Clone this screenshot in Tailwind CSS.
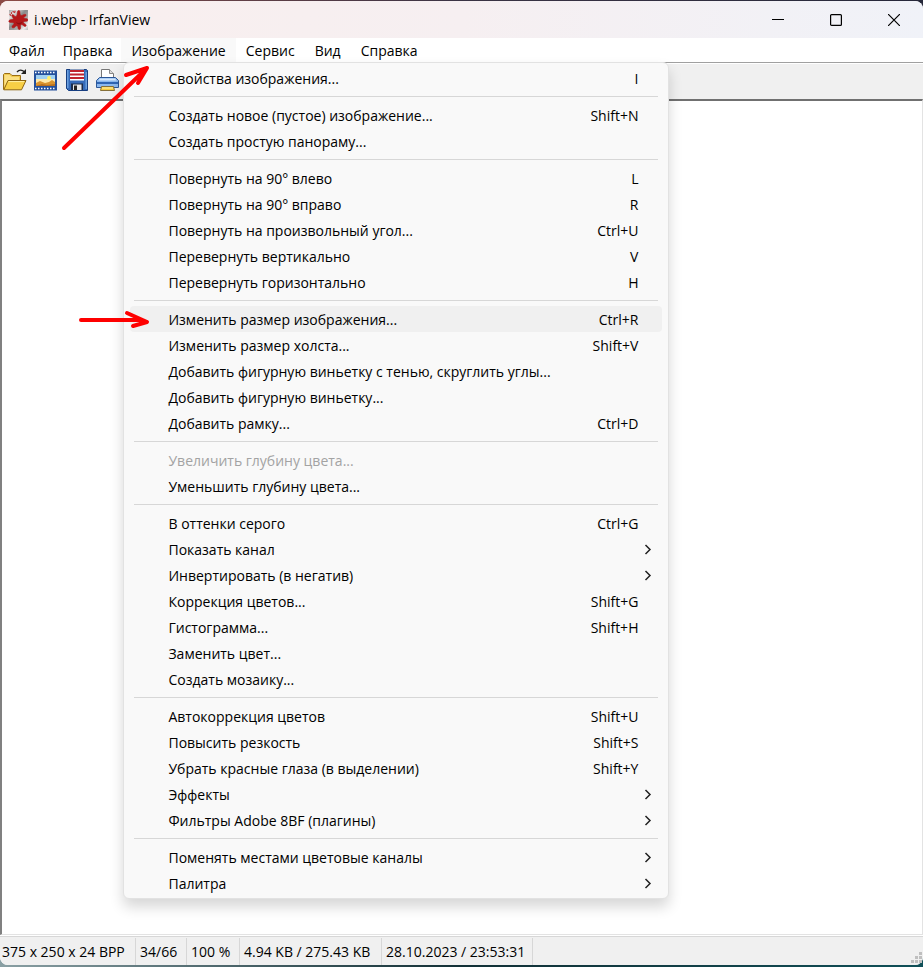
<!DOCTYPE html>
<html lang="ru">
<head>
    <meta charset="UTF-8">
    <title>i.webp - IrfanView</title>
    <script src="https://cdn.jsdelivr.net/npm/@tailwindcss/browser@4"></script>
</head>
<body class="flex flex-col h-screen pt-px pb-0.5 bg-linear-to-r from-[#8c4a45] via-[#3a3344] to-[#26283a] font-['Open_Sans','Noto_Sans',sans-serif] text-sm text-black relative overflow-hidden">
    <div class="absolute inset-x-0 bottom-0 h-4 bg-linear-to-r from-[#8aa0a4] via-[#123036] to-[#0f5058]"></div>

    <div class="relative flex-1 flex flex-col rounded-lg bg-white">
        <!-- Title bar -->
        <header class="flex items-center h-[37px] pl-2 rounded-t-lg bg-linear-to-r from-[#f9efee] via-[#f6eff1] to-[#f0f2f8]">
            <svg class="size-5" viewBox="0 0 20 20">
                <defs>
                    <linearGradient id="steel" x1="0" y1="0" x2="1" y2="1">
                        <stop offset="0" stop-color="#a8a8a8"/><stop offset=".2" stop-color="#e2e2e2"/><stop offset=".45" stop-color="#8a8a8a"/><stop offset=".7" stop-color="#b0b0b0"/><stop offset=".85" stop-color="#eee"/><stop offset="1" stop-color="#bbb"/>
                    </linearGradient>
                </defs>
                <path fill="url(#steel)" d="M1 0h19v20H1z"/>
                <path fill="#b3181a" stroke="#b3181a" stroke-width=".6" d="M7.500 6.500C9.500 6.500 9 4 9.500 1.500c.5-1.500 2.300-1.200 2.400.2.100 2 .2 4 1.600 3.800 1.500-.3 2.500-1.500 4-1.200 1 .5.500 1.800-.8 2.500-1.500.8-1.200 1.700.3 1.800 1.500.1 3 .2 3 1.500s-2 1.300-3.500 1.300c-1.600 0-1.500 1.200-.3 2 1.400.8 2.600 1.600 1.800 2.700-1 1-2.300-.3-3.500-1.200-1.500-1-2.300.2-2 2 .2 1.600-.2 2.800-1.300 2.700-1.300-.2-1-1.900-1.500-3.100-.6-1.400-1.700-.7-2.700.4-1 1-2.200 1.300-2.900.5-.5-1 .5-2 1.400-2.800 1-1 .6-2-1-2.200-1.500-.1-3.500.3-3.700-1C.700 10 2.600 9.600 4.200 9.600c1.500 0 1.300-1 .5-2C4 6.500 3.600 5.200 4.500 4.600c1.200-.4 1.700 1.900 3 1.900z"/>
                <path fill="none" stroke="#c23a3c" stroke-width="1.200" stroke-linecap="round" d="M5 1.500l1.600 1M2 4.500l1 1M3.500 2.500v1M7 1v1"/>
                <path fill="#8d0f12" d="M8 12c2 1.500 5 1 6.500-.5-.5 2-1.500 2.500-3 3-1.500.2-3-.8-3.500-2.500z"/>
            </svg>
            <h1 class="flex-1 pl-1.5">i.webp - IrfanView</h1>
            <button class="w-[58px] h-9 flex items-center justify-center" aria-label="Свернуть">
                <svg class="size-3" viewBox="0 0 12 12"><path stroke="#000" d="M0 5.500h12"/></svg>
            </button>
            <button class="w-[58px] h-9 flex items-center justify-center" aria-label="Развернуть">
                <svg class="size-3" viewBox="0 0 12 12"><rect x=".6" y=".6" width="10.800" height="10.800" rx="1" fill="none" stroke="#000" stroke-width="1.200"/></svg>
            </button>
            <button class="w-[58px] h-9 flex items-center justify-center" aria-label="Закрыть">
                <svg class="size-3" viewBox="0 0 12 12"><path stroke="#000" stroke-width="1.200" d="M0 0l12 12M12 0L0 12"/></svg>
            </button>
        </header>

        <!-- Menu bar -->
        <nav class="flex h-6 bg-white">
            <button class="px-[9px] pt-0.5 whitespace-nowrap">Файл</button>
            <button class="px-[9px] pt-0.5 whitespace-nowrap">Правка</button>
            <div class="relative flex">
                <button class="px-2.5 pt-0.5 whitespace-nowrap bg-[#f9f9f9]" aria-haspopup="menu" aria-expanded="true">Изображение</button>
                <div id="imageMenu" role="menu" class="absolute left-0.5 top-6 z-10 w-[546px] px-1.5 pt-0.5 pb-0.5 flex flex-col bg-[#f9f9f9] border border-[#e2e2e2] rounded-md shadow-[0_8px_14px_rgba(0,0,0,0.16)]"></div>
            </div>
            <button class="px-2.5 pt-0.5 whitespace-nowrap">Сервис</button>
            <button class="px-2.5 pt-0.5 whitespace-nowrap">Вид</button>
            <button class="px-2.5 pt-0.5 whitespace-nowrap">Справка</button>
        </nav>

        <!-- Toolbar -->
        <div class="flex items-center gap-1.5 h-[37px] pl-0.5 pb-px bg-[#f0f0f0] border-t border-[#a0a0a0] shadow-[inset_0_1px_#fff]">
            <button class="size-[25px]" aria-label="Открыть">
                <svg class="size-full" viewBox="0 0 25 25">
                    <path fill="#f0c94e" stroke="#9a6e14" d="M1.500 21.500v-15l1-1H8l2 2h8.500v5"/>
                    <path fill="#fbe083" d="M2.500 7h5l2 2H17v4H6l-3.500 6z"/>
                    <path fill="#f8cf45" stroke="#8d6410" d="M1.800 21.800L6 12.500h18l-4.500 9.300z"/>
                    <path fill="none" stroke="#fff0a8" d="M6.600 13.600h15.600"/>
                    <path fill="none" stroke="#222" stroke-width="1.300" d="M15 4c2-2.600 5-2.400 7.500-.2"/>
                    <path fill="#222" d="M24 1v5h-5z"/>
                </svg>
            </button>
            <button class="size-[25px]" aria-label="Слайд-шоу">
                <svg class="size-full" viewBox="0 0 25 25">
                    <path fill="#24509c" d="M1 2.500h23v20H1z"/>
                    <path fill="none" stroke="#fff" stroke-width="1.500" stroke-dasharray="1.500 1.500" d="M2 4.500h21M2 20.500h21"/>
                    <path fill="#9fd0f2" d="M3 7h19v11H3z"/>
                    <path fill="#ffe9a8" d="M3 11h19v4H3z"/>
                    <circle cx="16" cy="10" r="2" fill="#fff06a"/>
                    <path fill="#d9932f" d="M3 18v-3l4-2 5 2 4-1 3-2 3 2v4z"/>
                    <path fill="#b87020" d="M3 18l6-2 5 1 8-1v2z"/>
                </svg>
            </button>
            <button class="size-[25px]" aria-label="Сохранить">
                <svg class="size-full" viewBox="0 0 25 25">
                    <path fill="#356ab8" stroke="#173e80" d="M2.500 1.500h20l1 1v20h-19l-2-2z"/>
                    <path fill="#6ba0df" d="M3 2h1.500v18H3zM21.500 4H23v17h-1.500z"/>
                    <path fill="#fff" d="M6 1.500h14v11H6z"/>
                    <path stroke="#c0222c" stroke-width="2" d="M6 3h14M6 6.500h14M6 10h14"/>
                    <path fill="#1b2b48" d="M7 15.500h12V22H7z"/>
                    <path fill="#e8e8e8" d="M9 16.500h8.500V22H9z"/>
                    <path fill="#222" d="M10 17.500h3V22h-3z"/>
                </svg>
            </button>
            <button class="size-[25px]" aria-label="Печать">
                <svg class="size-full" viewBox="0 0 25 25">
                    <path fill="#fff" stroke="#777" d="M6.500 11V1.500h8l4 4V11"/>
                    <path fill="#ddd" stroke="#888" d="M14.500 1.500v4h4"/>
                    <path fill="#8bb8ee" stroke="#2c5797" d="M4.500 9.500h16l3 3v7h-22v-7z"/>
                    <path fill="#d4e7fd" d="M5 10.500h15l1.500 2H3.500z"/>
                    <path fill="#2f65b4" d="M2 14h21v2H2z"/>
                    <path fill="#f7c93b" stroke="#85703a" d="M6.500 18.500h12l1 4h-14z"/>
                    <path stroke="#fff3b0" d="M7 20h11"/>
                </svg>
            </button>
        </div>

        <!-- Canvas -->
        <main class="flex-1 bg-white border-t-2 border-l-2 border-r border-b border-t-[#707070] border-l-[#808080] border-r-[#e3e3e3] border-b-[#e3e3e3]"></main>

        <!-- Status bar -->
        <footer class="mt-px flex items-stretch h-[29px] pt-px bg-[#f0f0f0] border-t border-[#d7d7d7] rounded-b-lg whitespace-nowrap">
            <span class="w-[136px] pl-0.5 flex items-center border-r border-[#d7d7d7]">375 x 250 x 24 BPP</span>
            <span class="w-[51px] pl-1 flex items-center border-r border-[#d7d7d7]">34/66</span>
            <span class="w-[53px] pl-1 flex items-center border-r border-[#d7d7d7]">100 %</span>
            <span class="w-[142px] pl-1 flex items-center border-r border-[#d7d7d7]">4.94 KB / 275.43 KB</span>
            <span class="w-[151px] pl-1 flex items-center border-r border-[#d7d7d7]">28.10.2023 / 23:53:31</span>
            <svg class="ml-auto self-end size-3 mb-px" viewBox="0 0 12 12"><path fill="#bfbfbf" d="M8 0h3v3H8zM8 4h3v3H8zM8 8h3v3H8zM4 4h3v3H4zM4 8h3v3H4zM0 8h3v3H0z"/></svg>
        </footer>
    </div>

    <!-- Red pointers -->
    <svg class="absolute left-[60px] top-[62px] z-20 w-[92px] h-[90px] pointer-events-none" viewBox="0 0 92 90" fill="none" stroke="#fe0000" stroke-width="4" stroke-linecap="round" stroke-linejoin="round">
        <path d="M4 86L87 6M66 13L87 6L78 21"/>
    </svg>
    <svg class="absolute left-[78px] top-[308px] z-20 w-[74px] h-6 pointer-events-none" viewBox="0 0 74 24" fill="none" stroke="#fe0000" stroke-width="4" stroke-linecap="round" stroke-linejoin="round">
        <path d="M3 12H62L69 14M49 5L69 14L55 18"/>
    </svg>

    <script>
        // [label, shortcut], '>' marks a submenu, null is a separator
        const items = [
            ['Свойства изображения...', 'I'],
            null,
            ['Создать новое (пустое) изображение...', 'Shift+N'],
            ['Создать простую панораму...', ''],
            null,
            ['Повернуть на 90° влево', 'L'],
            ['Повернуть на 90° вправо', 'R'],
            ['Повернуть на произвольный угол...', 'Ctrl+U'],
            ['Перевернуть вертикально', 'V'],
            ['Перевернуть горизонтально', 'H'],
            null,
            ['Изменить размер изображения...', 'Ctrl+R', 'active'],
            ['Изменить размер холста...', 'Shift+V'],
            ['Добавить фигурную виньетку с тенью, скруглить углы...', ''],
            ['Добавить фигурную виньетку...', ''],
            ['Добавить рамку...', 'Ctrl+D'],
            null,
            ['Увеличить глубину цвета...', '', 'disabled'],
            ['Уменьшить глубину цвета...', ''],
            null,
            ['В оттенки серого', 'Ctrl+G'],
            ['Показать канал', '>'],
            ['Инвертировать (в негатив)', '>'],
            ['Коррекция цветов...', 'Shift+G'],
            ['Гистограмма...', 'Shift+H'],
            ['Заменить цвет...', ''],
            ['Создать мозаику...', ''],
            null,
            ['Автокоррекция цветов', 'Shift+U'],
            ['Повысить резкость', 'Shift+S'],
            ['Убрать красные глаза (в выделении)', 'Shift+Y'],
            ['Эффекты', '>'],
            ['Фильтры Adobe 8BF (плагины)', '>'],
            null,
            ['Поменять местами цветовые каналы', '>'],
            ['Палитра', '>']
        ];
        const chevron = '<svg class="w-2 h-3 -mr-3.5" viewBox="0 0 8 12"><path fill="none" stroke="#222" stroke-width="1.500" d="M1.500 1L6 5.500 1.500 10"/></svg>';
        let html = '';
        items.forEach(item => {
            if (!item) {
                html += '<hr class="mx-1 my-[5px] border-[#d7d7d7]">';
                return;
            }
            const [label, key, state] = item;
            const look = state === 'active' ? 'bg-[#f0f0f0]' : '';
            html += '<button role="menuitem" class="flex items-center justify-between h-[26px] pt-0.5 pl-[38px] pr-6 rounded text-left whitespace-nowrap disabled:text-[#a3a3a3] ' + look + '"' + (state === 'disabled' ? ' disabled' : '') + '>' +
                '<span>' + label + '</span>' + (key === '>' ? chevron : '<span>' + key + '</span>') +
                '</button>';
        });
        document.getElementById('imageMenu').innerHTML = html;
    </script>
</body>
</html>
